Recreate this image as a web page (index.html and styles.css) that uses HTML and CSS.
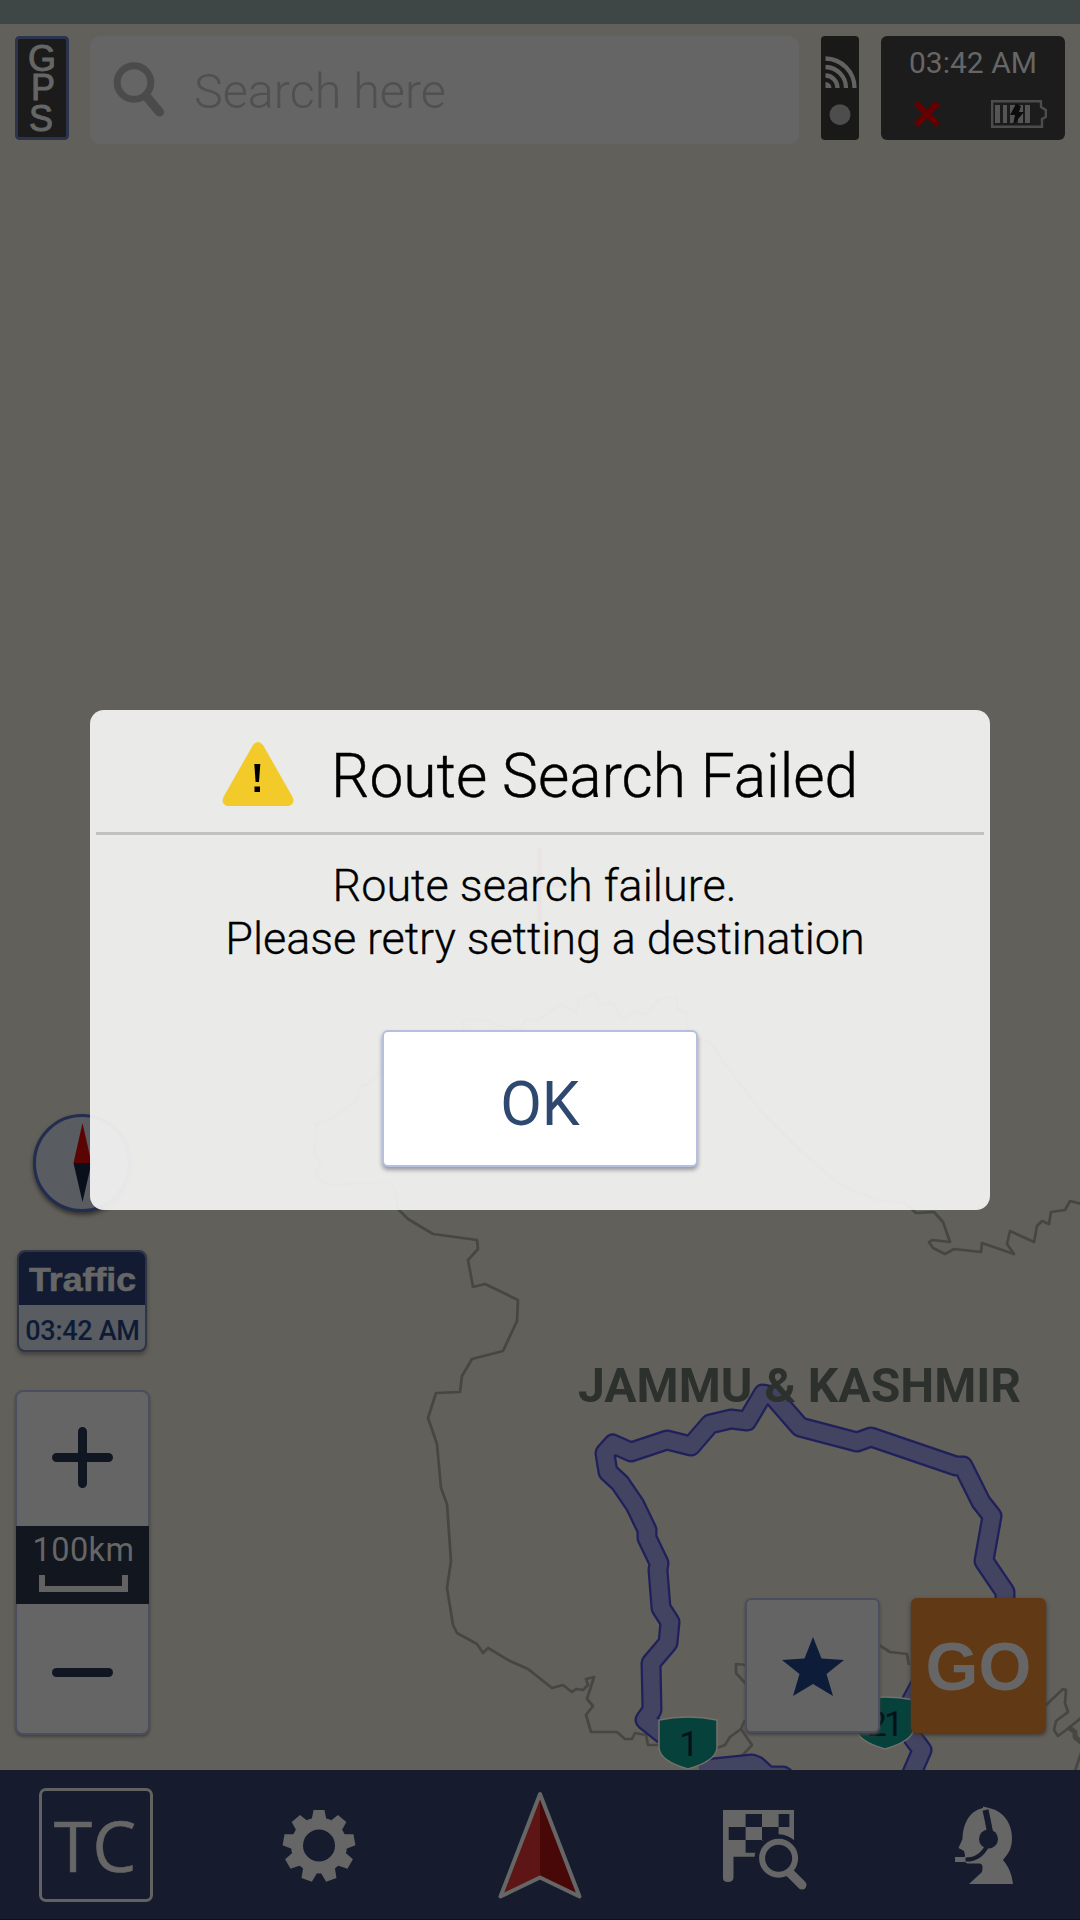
FILE: index.html
```html
<!DOCTYPE html>
<html lang="en">
<head>
<meta charset="utf-8">
<title>Navigation</title>
<link rel="stylesheet" href="styles.css">
</head>
<body>
<div class="app">
  <div class="status-bar"></div>
  <main class="map-area">
    <svg class="map" viewBox="0 24 1080 1746" aria-hidden="true">
      <g class="border-line">
        <path d="M464 1030L462 1020 489 1021 500 1026 521 1029 526 1019 537 1021 560 1004 577 1013 579 999 594 993 600 1004 613 1003 623 1020 635 1010 645 1015 660 999 676 997 677 1008 686 1013 687 1030 702 1040 712 1044 720 1057 760 1110 800 1150 840 1185 880 1201 904 1202 916 1213 934 1212 943 1222 950 1242 932 1240 929 1242 933 1248 945 1254 954 1249 981 1252 982 1243 1014 1254 1007 1244 1010 1231 1034 1242 1037 1226 1042 1221 1049 1224 1051 1212 1065 1210 1070 1201 1082 1204"/>
        <path d="M383 1069L368 1084 359 1087 357 1100 333 1118 316 1124 315 1153 320 1163 315 1177 330 1185 390 1182 394 1187 397 1203 399 1210 408 1219 433 1234 477 1240 478 1249 468 1260 473 1287 485 1284 518 1300 517 1321 503 1351 472 1359 462 1376 460 1392 436 1393 428 1418 437 1444 441 1488 447 1504 451 1561 447 1588 453 1625 457 1633 477 1644 483 1653 488 1648 510 1661 528 1669 552 1688 563 1685 572 1692 576 1689 583 1690 588 1685 586 1679 594 1677 587 1699 593 1706 586 1715 591 1732 617 1732 625 1739 632 1739 635 1733 646 1735 648 1745 660 1745"/>
        <path d="M717 1748L725 1745 730 1737 741 1729 745 1720M741 1729L752 1745 740 1758M746 1665L736 1664V1673L746 1684M879 1645L890 1652 907 1654 909 1665"/>
        <path d="M1045 1706L1063 1689 1066 1690 1065 1703 1068 1712 1056 1721 1054 1730 1058 1736 1070 1727 1082 1717M1082 1750L1075 1771"/>
        <path class="border-bold" d="M1068 1727L1075 1732 1075 1737 1082 1743"/>
      </g>
      <g class="road">
        <g class="road-case">
          <path d="M664 1735L645 1720 652 1710 651 1663 668 1643 670 1622 661 1608 658 1570 659 1563 647 1538 647 1530 635 1505 620 1483 608 1472 606 1460 605 1453 613 1444 631 1452 667 1440 691 1446 710 1424 731 1419 747 1421 763 1394 773 1396 800 1427 857 1442 871 1437 956 1466 963 1466 981 1502 992 1516 984 1561 1005 1592V1612"/>
          <path d="M700 1771L713 1768 752 1764 757 1766 768 1776 783 1776 793 1784M925 1676L912 1700 905 1720 913 1738 922 1750 909 1780"/>
        </g>
        <g class="road-fill">
          <path d="M664 1735L645 1720 652 1710 651 1663 668 1643 670 1622 661 1608 658 1570 659 1563 647 1538 647 1530 635 1505 620 1483 608 1472 606 1460 605 1453 613 1444 631 1452 667 1440 691 1446 710 1424 731 1419 747 1421 763 1394 773 1396 800 1427 857 1442 871 1437 956 1466 963 1466 981 1502 992 1516 984 1561 1005 1592V1612"/>
          <path d="M700 1771L713 1768 752 1764 757 1766 768 1776 783 1776 793 1784M925 1676L912 1700 905 1720 913 1738 922 1750 909 1780"/>
        </g>
      </g>
      <text class="region" x="578" y="1402" textLength="443" lengthAdjust="spacingAndGlyphs">JAMMU &amp; KASHMIR</text>
      <path class="shield" d="M659 1720Q673 1717 688 1717T717 1720V1748Q716 1761 688 1769 660 1761 659 1748Z"/>
      <text class="route" x="689" y="1756">1</text>
      <path class="shield" d="M856 1700Q870 1697 885 1697T914 1700V1728Q913 1741 885 1749 857 1741 856 1728Z"/>
      <text class="route route-tight" x="884" y="1736">21</text>
      <path class="cursor" d="M539.500 848v74M502 885h75"/>
    </svg>

    <header class="top-bar">
      <svg class="gps" viewBox="0 0 54 104" role="img">
        <rect x="1.500" y="1.500" width="51" height="101" rx="3"/>
        <text x="27" y="34.500">G</text><text x="28" y="64">P</text><text x="26" y="94.500">S</text>
      </svg>
      <div class="search">
        <svg class="search-icon" width="52" height="58" viewBox="0 0 52 58"><circle cx="21" cy="21.500" r="16.800"/><path d="M33.500 35.500L46.500 51"/></svg>
        <span>Search here</span>
      </div>
      <svg class="signal" viewBox="0 0 38 104">
        <g transform="translate(4.500 52)"><path d="M0-29.500A29.500 29.500 0 0 1 29 0M0-21A21 21 0 0 1 20.500 0M0-12.500A12 12.500 0 0 1 12 0"/><path class="solid" d="M0-6A6 6 0 0 1 6 0H0Z"/></g>
        <circle cx="19" cy="78.700" r="10.500"/>
      </svg>
      <div class="clock">
        <span>03:42 AM</span>
        <div class="clock-icons">
          <svg width="28" height="28" viewBox="0 0 28 28"><path class="cross" d="M2 3L24 25M24 3L2 25"/></svg>
          <svg width="56" height="28" viewBox="0 0 56 28"><path class="battery" d="M1.200 1.200H50V7L54.800 10V17L51 19V26.800H1.200Z"/><path class="cells" d="M4 5h5v18H4zM12 5h4v18h-4zM19 5h5v18h-5zM27 5h5v18h-5zM34 5h5v18h-5z"/><path class="bolt" d="M25 4L19 15H24L22 25 33 12H28L30 6Z"/></svg>
        </div>
      </div>
    </header>

    <div class="controls">
      <div class="left-tools">
        <svg class="compass" width="104" height="104" viewBox="0 0 104 104"><circle cx="50" cy="49" r="47.500"/><path class="north" d="M50.500 9L59.500 49H41.500Z"/><path class="south" d="M50.500 88L41.500 49H59.500Z"/></svg>
        <div class="traffic">
          <svg class="traffic-title" viewBox="0 0 130 54"><text x="12" y="40" textLength="107" lengthAdjust="spacingAndGlyphs">Traffic</text></svg>
          <span>03:42 AM</span>
        </div>
        <div class="zoom">
          <svg class="zoom-key" viewBox="0 0 61 61"><path d="M4.500 30.500H56.500M30.500 4.500V56.500"/></svg>
          <div class="scale"><span>100km</span><i></i></div>
          <svg class="zoom-key" viewBox="0 0 61 61"><path d="M4.500 30.500H56.500"/></svg>
        </div>
      </div>
      <div class="right-tools">
        <button class="favorite"><svg width="64" height="62" viewBox="0 0 64 62"><path d="M32 1L40.500 22.500 63 24 45.500 38 52 60 32 48 12 60 18.500 38 1 24 23.500 22.500Z"/></svg></button>
        <button class="go">GO</button>
      </div>
    </div>
  </main>

  <nav class="bottom-nav">
    <span class="tc">TC</span>
    <svg viewBox="261 1788 114 114"><g class="icon"><circle class="gear-ring" cx="319" cy="1845.500" r="22"/>
      <path id="tooth" d="M311 1823L313.500 1810H324.500L327 1823Z"/>
      <use href="#tooth" transform="rotate(40 319 1846)"/><use href="#tooth" transform="rotate(80 319 1846)"/><use href="#tooth" transform="rotate(120 319 1846)"/><use href="#tooth" transform="rotate(160 319 1846)"/><use href="#tooth" transform="rotate(200 319 1846)"/><use href="#tooth" transform="rotate(240 319 1846)"/><use href="#tooth" transform="rotate(280 319 1846)"/><use href="#tooth" transform="rotate(320 319 1846)"/></g></svg>
    <svg viewBox="483 1788 114 114"><path fill="#5e1515" d="M540 1795L501 1896 540 1877Z"/><path fill="#480808" d="M540 1795L579 1896 540 1877Z"/><path class="arrow-edge" d="M540 1794L500.500 1896.500 540 1877.500 579.500 1896.500Z"/></svg>
    <svg viewBox="705 1788 114 114">
      <path class="icon" fill-rule="evenodd" d="M723 1810H794V1856.700H733.500V1878Q733 1882 728 1882T723 1878ZM745.600 1814V1827H762V1814ZM778.600 1814V1827H789.400V1814ZM728.700 1827V1840H745.600V1827ZM762 1827V1840H778.600V1827ZM745.600 1840V1852.700H762V1840Z"/>
      <circle class="nav-fill" cx="778.600" cy="1858.300" r="24"/><circle class="lens" cx="778.600" cy="1858.300" r="16.500"/><path class="handle" d="M790 1873L802 1885"/>
    </svg>
    <svg viewBox="927 1788 114 114">
      <path class="icon" d="M983 1806.500L989 1808C1003 1811 1012 1823 1012 1838 1012 1849 1008 1854 1003 1860 1009 1867 1012 1875 1013 1884H969L982 1872Q984 1863 979 1863.500H967L964 1861 965 1855 964 1851 958.500 1848 962.500 1839C963 1824 969 1811 983 1808Z"/>
      <path class="band" d="M985.500 1810Q988 1821 990 1832"/><circle class="nav-fill" cx="988.500" cy="1839" r="9.500"/><path class="band band-thin" d="M987 1846Q980 1860 965 1859.500"/>
      <rect class="icon" x="955" y="1857" width="10.500" height="5"/>
    </svg>
  </nav>

  <div class="overlay">
    <section class="dialog">
      <h1><svg width="72" height="64" viewBox="0 0 72 64"><path class="warn" d="M31 3Q36-3 41 3L70 54Q74 61 67 64H5Q-2 61 2 54Z"/><path d="M32.300 22H38.300L37 40H33.600ZM32.500 44.500H38V50H32.500Z"/></svg><span>Route Search Failed</span></h1>
      <p><span class="first">Route search failure.</span><br>Please retry setting a destination</p>
      <button class="ok">OK</button>
    </section>
  </div>
</div>
</body>
</html>
```

FILE: styles.css
```css
* { box-sizing: border-box; }
body { margin: 0; font-family: Roboto, sans-serif; background: #62605b; }
button { margin: 0; padding: 0; font-family: inherit; }
svg { display: block; flex: none; }

.app { position: relative; width: 1080px; height: 1920px; display: flex; flex-direction: column; overflow: hidden; }
.status-bar { height: 24px; background: #3e4745; }
.map-area { position: relative; flex: 1; display: flex; flex-direction: column; justify-content: space-between; padding: 12px 15px 35px; background: #62605b; }

.map { position: absolute; inset: 0; width: 1080px; height: 1746px; }
.border-line { fill: none; stroke: #464643; stroke-width: 2.7; stroke-linejoin: round; }
.border-bold { stroke-width: 5; }
.road { fill: none; stroke-linejoin: round; }
.road-case { stroke: #20205a; stroke-width: 21; }
.road-fill { stroke: #434362; stroke-width: 16.5; }
.region { font-size: 48px; font-weight: 700; fill: #2c312d; }
.shield { fill: #07413b; stroke: #73716c; stroke-width: 1.5; }
.route { font-size: 35px; fill: #03121a; text-anchor: middle; }
.route-tight { letter-spacing: -3px; }
.cursor { fill: none; stroke: #641010; stroke-width: 5; }

.top-bar { position: relative; display: flex; align-items: flex-start; }
.gps { width: 54px; height: 104px; margin-right: 21px; }
.gps rect { fill: #1b1b1b; stroke: #2b334d; stroke-width: 3; }
.gps text { font: 36px "Liberation Sans", sans-serif; fill: #666; stroke: #666; stroke-width: 1; text-anchor: middle; }
.search { width: 709px; height: 108px; margin-right: 22px; padding-left: 23px; display: flex; align-items: center; gap: 29px; border-radius: 10px; background: #656565; color: #505050; font-size: 48.5px; font-weight: 300; }
.search span { padding-top: 3px; }
.search-icon { fill: none; stroke: #4b4b4b; stroke-width: 7; stroke-linecap: round; }
.search-icon path { stroke-width: 9; }
.signal { width: 38px; height: 104px; margin-right: 22px; border-radius: 4px; background: #191917; fill: #4d4d4d; }
.signal path { fill: none; stroke: #626262; stroke-width: 4.3; }
.signal .solid { fill: #626262; stroke: none; }
.clock { width: 184px; height: 104px; padding: 9px 18px 12px 33px; display: flex; flex-direction: column; justify-content: space-between; border-radius: 6px; background: #1c1c1c; color: #666; font-size: 30px; line-height: 35px; }
.clock span { margin-left: -5px; white-space: nowrap; }
.clock-icons { display: flex; justify-content: space-between; }
.cross { stroke: #660000; stroke-width: 6; }
.battery { fill: none; stroke: #4c4c4c; stroke-width: 2.4; }
.cells { fill: #555; }
.bolt { fill: #0c0c0c; }

.controls { position: relative; display: flex; justify-content: space-between; align-items: flex-end; padding-right: 19px; }
.left-tools { width: 136px; display: flex; flex-direction: column; }
.compass { margin: 0 0 32px 17px; filter: drop-shadow(0 3px 2px #33332f); }
.compass circle { fill: #595c61; stroke: #222d50; stroke-width: 3; }
.north { fill: #5c0404; }
.south { fill: #090f1b; }
.traffic { width: 130px; height: 102px; margin: 0 0 38px 2px; border: 2px solid #2d3547; border-radius: 8px; background: #595c61; box-shadow: 0 3px 4px #45433f; color: #0e1b36; font-size: 27px; font-weight: 500; line-height: 53px; text-align: center; white-space: nowrap; overflow: hidden; }
.traffic span { letter-spacing: -.3px; padding-left: 1px; }
.traffic-title { width: 130px; height: 54px; margin: -1px 0 0 -2px; background: #121b31; }
.traffic-title text { font: 700 34px "Liberation Sans", sans-serif; fill: #666; stroke: #666; stroke-width: .7; }
.zoom { width: 135px; height: 345px; display: flex; flex-direction: column; align-items: center; border: 2px solid #4a4e5e; border-radius: 8px; background: #656565; box-shadow: 0 2px 3px #45433f; }
.zoom-key { width: 61px; height: 61px; margin: 35px 0 38px; fill: none; stroke: #111722; stroke-width: 9; stroke-linecap: round; }
.zoom-key:last-child { margin: 38px 0 0; }
.scale { flex: none; width: 133px; height: 78px; display: flex; flex-direction: column; align-items: center; background: #12161e; color: #666; font-size: 32.5px; line-height: 38px; padding-top: 5px; }
.scale span { letter-spacing: .4px; padding-left: 2px; }
.scale i { width: 89px; height: 17px; margin: 6px 0 0 2px; border: 6px solid #626262; border-top: 0; }
.right-tools { display: flex; gap: 31px; padding-bottom: 2px; }
.favorite, .go { width: 135px; height: 135px; display: flex; align-items: center; justify-content: center; border-radius: 6px; }
.favorite { border: 2px solid #4a4e5e; background: #646464; fill: #0d1c38; box-shadow: 0 2px 3px #45433f; }
.favorite svg { margin-top: 2px; }
.go { border: 0; background: #613914; color: #666; font: 700 68px "Liberation Sans", sans-serif; box-shadow: 0 2px 4px #3b342b; }

.bottom-nav { height: 150px; padding: 18px 0; margin-left: -15px; display: grid; grid-template-columns: repeat(5, 222px); justify-items: center; background: #161c2d; border-bottom: 1px solid #0d1020; }
.bottom-nav svg { width: 114px; height: 114px; }
.tc { width: 114px; height: 114px; padding-right: 2px; border: 3px solid #626262; border-radius: 7px; color: #666; font: 70px/108px "Open Sans", sans-serif; text-align: center; -webkit-text-stroke: .5px #666; }
.icon { fill: #666; }
.gear-ring { fill: none; stroke: #666; stroke-width: 12; }
.arrow-edge { fill: none; stroke: #666; stroke-width: 4; stroke-linejoin: round; }
.nav-fill { fill: #161c2d; }
.lens { fill: none; stroke: #666; stroke-width: 6; }
.handle { stroke: #666; stroke-width: 9; stroke-linecap: round; }
.band { fill: none; stroke: #161c2d; stroke-width: 6; }
.band-thin { stroke-width: 4; }

.overlay { position: absolute; inset: 0; display: flex; align-items: center; justify-content: center; }
.dialog { width: 900px; height: 500px; padding: 0 6px; display: flex; flex-direction: column; align-items: center; border-radius: 14px; background: rgba(241, 241, 240, .95); color: #000; }
.dialog h1 { width: 100%; height: 125px; margin: 0; padding: 6px 0 0 126px; display: flex; align-items: center; gap: 37px; border-bottom: 3px solid #c1c1be; font-size: 60.5px; font-weight: 300; white-space: nowrap; -webkit-text-stroke: .4px #000; }
.dialog h1 span { padding-top: 4px; }
.warn { fill: #f2cb2b; }
.dialog p { margin: 24px 0 53px; font-size: 45px; font-weight: 300; line-height: 53px; letter-spacing: -.1px; text-align: center; padding-left: 10px; white-space: nowrap; -webkit-text-stroke: .3px #000; }
.first { margin-right: 21px; letter-spacing: 0; }
.ok { width: 316px; height: 137px; margin-top: 12px; padding-top: 12px; border: 2px solid #b5bfdf; border-radius: 6px; background: #fff; color: #2f4870; font-size: 60.5px; box-shadow: 0 3px 4px #9698a0; }
```
